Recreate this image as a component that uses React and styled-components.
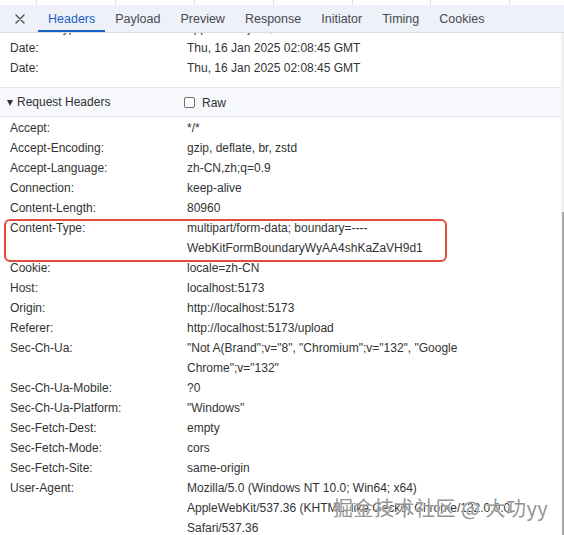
import React, { useLayoutEffect, useRef } from "react";
import styled, { createGlobalStyle } from "styled-components";

const GlobalStyle = createGlobalStyle`
  html, body {
    margin: 0;
    padding: 0;
    background: #ffffff;
  }
  body {
    font-family: "Liberation Sans", Arial, "Noto Sans CJK SC", sans-serif;
    color: #333;
    overflow: hidden;
  }
`;

const Panel = styled.div`
  width: 564px;
  height: 535px;
  display: flex;
  flex-direction: column;
  position: relative;
  overflow: hidden;
`;

const ListStrip = styled.div`
  height: 5px;
  display: flex;
  background: #fff;
  flex-shrink: 0;
`;

const ListCell = styled.div`
  width: ${(p) => p.$w}px;
  flex-shrink: 0;
  border-right: 1px solid #dcdfe5;
`;

const TabBar = styled.div`
  height: 28px;
  display: flex;
  align-items: stretch;
  background: #eef1f8;
  border-bottom: 1px solid #d9dde6;
  box-sizing: border-box;
  flex-shrink: 0;
`;

const CloseButton = styled.div`
  width: 38px;
  display: flex;
  align-items: center;
  justify-content: center;
  padding-left: 2px;
  box-sizing: border-box;
`;

const Tab = styled.div`
  padding: 1px 10px 0;
  display: flex;
  align-items: center;
  font-size: 12.5px;
  color: ${(p) => (p.$active ? "#1b5fc4" : "#474a50")};
  box-shadow: ${(p) => (p.$active ? "inset 0 -2px 0 #1b5fc4" : "none")};
`;

const Body = styled.div`
  flex: 1;
  display: flex;
  min-height: 0;
`;

const Viewport = styled.div`
  flex: 1;
  overflow: hidden;
  position: relative;
`;

const ScrollTrack = styled.div`
  width: 3px;
  background: #f1f1f1;
  display: flex;
  flex-direction: column;
`;

const ScrollThumb = styled.div`
  margin-top: ${(p) => p.$top}px;
  flex: 1;
  margin-left: 1px;
  width: 2px;
  background: #a9a9a9;
`;

const Section = styled.div`
  padding: ${(p) => p.$pad};
  border-bottom: ${(p) => (p.$line ? "1px solid #e1e5ee" : "none")};
`;

const SectionHeader = styled.div`
  height: 28px;
  display: flex;
  align-items: center;
  background: #f6f8fc;
  border-bottom: 1px solid #e1e5ee;
  font-size: 12px;
  color: #303030;
`;

const HeaderTitle = styled.div`
  width: 184px;
  display: flex;
  align-items: center;
  padding-left: 7px;
  box-sizing: border-box;
  gap: 4px;
`;

const Triangle = styled.span`
  width: 0;
  height: 0;
  border-left: 3.5px solid transparent;
  border-right: 3.5px solid transparent;
  border-top: 6px solid #303030;
  margin-top: 1px;
`;

const RawToggle = styled.label`
  display: flex;
  align-items: center;
  gap: 7px;
  margin-top: 1px;
`;

const Checkbox = styled.span`
  width: 9px;
  height: 9px;
  border: 1px solid #6f6f6f;
  border-radius: 2px;
  background: #fff;
`;

const Row = styled.div`
  display: grid;
  grid-template-columns: 177px 1fr;
  padding-left: 10px;
  font-size: 12px;
  line-height: 20px;
  color: #333;
  position: relative;

  ${(p) =>
    p.$marked &&
    `
    &::after {
      content: "";
      position: absolute;
      left: 4px;
      top: 1px;
      width: 443px;
      height: 43px;
      box-sizing: border-box;
      border: 2px solid #e24b3d;
      border-radius: 6px;
    }
  `}
`;

const Key = styled.div`
  white-space: nowrap;
`;

const Value = styled.div`
  white-space: nowrap;
`;

const Watermark = styled.div`
  position: absolute;
  left: 333px;
  top: 495px;
  font-family: "Noto Sans CJK SC", "Liberation Sans", sans-serif;
  font-size: 20px;
  line-height: 26px;
  color: rgba(105, 105, 105, 0.72);
  text-shadow: 0 0 1px #fff, 0 0 1px #fff;
  white-space: nowrap;
  letter-spacing: 0.5px;
  pointer-events: none;
`;

const listWidths = [36, 78, 78, 78, 78, 77, 78, 60];
const tabs = ["Headers", "Payload", "Preview", "Response", "Initiator", "Timing", "Cookies"];

const responseRows = [
  ["Content-Type:", ["application/json; charset=utf-8"]],
  ["Date:", ["Thu, 16 Jan 2025 02:08:45 GMT"]],
  ["Date:", ["Thu, 16 Jan 2025 02:08:45 GMT"]],
];

const requestRows = [
  ["Accept:", ["*/*"]],
  ["Accept-Encoding:", ["gzip, deflate, br, zstd"]],
  ["Accept-Language:", ["zh-CN,zh;q=0.9"]],
  ["Connection:", ["keep-alive"]],
  ["Content-Length:", ["80960"]],
  ["Content-Type:", ["multipart/form-data; boundary=----", "WebKitFormBoundaryWyAA4shKaZaVH9d1"], true],
  ["Cookie:", ["locale=zh-CN"]],
  ["Host:", ["localhost:5173"]],
  ["Origin:", ["http://localhost:5173"]],
  ["Referer:", ["http://localhost:5173/upload"]],
  ["Sec-Ch-Ua:", ['"Not A(Brand";v="8", "Chromium";v="132", "Google', 'Chrome";v="132"']],
  ["Sec-Ch-Ua-Mobile:", ["?0"]],
  ["Sec-Ch-Ua-Platform:", ['"Windows"']],
  ["Sec-Fetch-Dest:", ["empty"]],
  ["Sec-Fetch-Mode:", ["cors"]],
  ["Sec-Fetch-Site:", ["same-origin"]],
  [
    "User-Agent:",
    [
      "Mozilla/5.0 (Windows NT 10.0; Win64; x64)",
      "AppleWebKit/537.36 (KHTML, like Gecko) Chrome/132.0.0.0",
      "Safari/537.36",
    ],
  ],
];

const HeaderRow = ({ name, lines, marked }) => (
  <Row $marked={marked}>
    <Key>{name}</Key>
    <Value>
      {lines.map((l, i) => (
        <div key={i}>{l}</div>
      ))}
    </Value>
  </Row>
);

const CloseIcon = () => (
  <svg width="10" height="10" viewBox="0 0 10 10">
    <path d="M1 1L9 9M9 1L1 9" stroke="#4a4d52" strokeWidth="1.3" strokeLinecap="round" />
  </svg>
);

const App = () => {
  const viewRef = useRef(null);

  useLayoutEffect(() => {
    if (viewRef.current) viewRef.current.scrollTop = 15;
  }, []);

  return (
    <>
      <GlobalStyle />
      <Panel>
        <ListStrip>
          {listWidths.map((w, i) => (
            <ListCell key={i} $w={w} />
          ))}
        </ListStrip>
        <TabBar>
          <CloseButton>
            <CloseIcon />
          </CloseButton>
          {tabs.map((t) => (
            <Tab key={t} $active={t === "Headers"}>
              {t}
            </Tab>
          ))}
        </TabBar>
        <Body>
          <Viewport ref={viewRef}>
            <Section $pad="0 0 9px" $line>
              {responseRows.map(([n, l], i) => (
                <HeaderRow key={i} name={n} lines={l} />
              ))}
            </Section>
            <SectionHeader>
              <HeaderTitle>
                <Triangle />
                Request Headers
              </HeaderTitle>
              <RawToggle>
                <Checkbox />
                Raw
              </RawToggle>
            </SectionHeader>
            <Section $pad="1px 0 0">
              {requestRows.map(([n, l, m], i) => (
                <HeaderRow key={i} name={n} lines={l} marked={m} />
              ))}
            </Section>
          </Viewport>
          <ScrollTrack>
            <ScrollThumb $top={179} />
          </ScrollTrack>
        </Body>
        <Watermark>掘金技术社区 @ 大功yy</Watermark>
      </Panel>
    </>
  );
};

export default App;
